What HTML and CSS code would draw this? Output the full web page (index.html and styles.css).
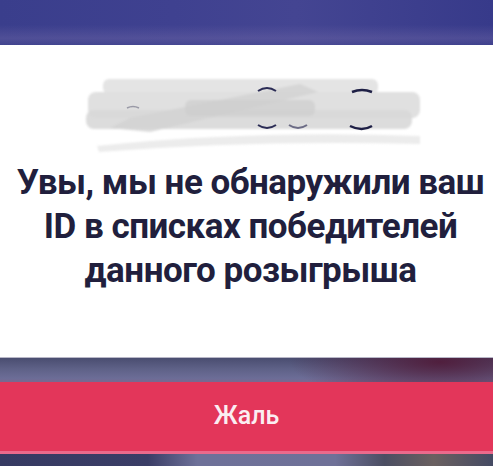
FILE: index.html
```html
<!DOCTYPE html>
<html lang="ru">
<head>
<meta charset="utf-8">
<title>Розыгрыш</title>
<link rel="stylesheet" href="styles.css">
</head>
<body>
<div class="screen">
  <div class="band band-top"></div>
  <div class="card">
    <svg class="scribble" width="493" height="90" viewBox="0 70 493 90" aria-hidden="true">
      <!-- redaction strokes over the hidden ID -->
      <g class="strokes">
        <rect x="103" y="79" width="275" height="15" rx="6" fill="#e4e4e4"/>
        <rect x="88" y="92" width="332" height="26" rx="8" fill="#e0e0e0"/>
        <rect x="86" y="110" width="326" height="19" rx="8" fill="#d8d8d8" opacity="0.9"/>
        <polygon points="110,128 130,118 300,84 318,92 150,132" fill="#d2d2d2" opacity="0.8"/>
        <rect x="185" y="100" width="130" height="16" rx="6" fill="#cdcdcd" opacity="0.7"/>
        <path d="M97 146 Q250 130 420 136 L420 144 Q250 140 99 152 Z" fill="#ececec"/>
      </g>
      <!-- remnants of the digits showing through -->
      <path d="M258 91 Q267 85 276 91" stroke="#2b2c55" stroke-width="2" fill="none"/>
      <path d="M258 125 Q267 131 276 125" stroke="#2b2c55" stroke-width="2" fill="none"/>
      <path d="M289 125 Q298 131 307 125" stroke="#3a3b60" stroke-width="2" fill="none" opacity="0.7"/>
      <path d="M352 92 Q362 88 372 92" stroke="#1e1f45" stroke-width="2.5" fill="none"/>
      <path d="M350 126 Q362 132 372 126" stroke="#1e1f45" stroke-width="2.5" fill="none"/>
      <path d="M127 108 Q133 105 139 108" stroke="#6a6b80" stroke-width="1.5" fill="none" opacity="0.6"/>
    </svg>
    <h1 class="message">Увы, мы не обнаружили ваш<br>ID в списках победителей<br>данного розыгрыша</h1>
  </div>
  <div class="band band-mid"></div>
  <button class="action" type="button">Жаль</button>
  <div class="band band-bottom"></div>
</div>
</body>
</html>
```
FILE: styles.css
```css
html, body {
  margin: 0;
  padding: 0;
  background: #3b3e88;
}

.screen {
  width: 493px;
  height: 466px;
  display: flex;
  flex-direction: column;
  overflow: hidden;
}

.band-top {
  height: 45px;
  background:
    linear-gradient(180deg, rgba(255,255,255,0) 55%, rgba(120,110,170,0.35) 85%, rgba(90,90,150,0.2) 100%),
    linear-gradient(90deg, #3a3e8c 0%, #3f4190 35%, #444592 60%, #373a8a 100%);
}

.card {
  height: 312px;
  background: #ffffff;
  display: flex;
  flex-direction: column;
  align-items: center;
}

.scribble {
  display: block;
  margin-top: 25px;
}

.strokes {
  filter: blur(1px);
}

.message {
  margin: 1px 0 0 8px;
  font-family: Roboto, "Noto Sans", sans-serif;
  font-weight: 700;
  font-size: 35px;
  line-height: 44px;
  letter-spacing: -0.5px;
  color: #211f3d;
  text-align: center;
  white-space: nowrap;
}

.band-mid {
  height: 25px;
  background:
    radial-gradient(ellipse 150px 40px at 440px 4px, rgba(80,25,55,0.9), rgba(80,25,55,0) 100%),
    linear-gradient(180deg, #4a4d70 0%, #5e6187 45%, #6c6d97 85%, #7a6890 100%);
  border-top: 1px solid #b9b8c8;
  box-sizing: border-box;
}

.action {
  height: 72px;
  width: 100%;
  margin: 0;
  padding: 0 0 2px;
  border: 0;
  border-bottom: 3px solid #ea6a8c;
  background: #e3365a;
  color: #fbeef2;
  font-family: Roboto, "Noto Sans", sans-serif;
  font-weight: 500;
  font-size: 25px;
  box-sizing: border-box;
}

.band-bottom {
  flex: 1;
  background: linear-gradient(90deg, #363a62 0%, #3a3d66 30%, #6e7199 40%, #6f7198 68%, #4b4e62 78%, #6a6060 88%, #454a63 100%);
}
```
